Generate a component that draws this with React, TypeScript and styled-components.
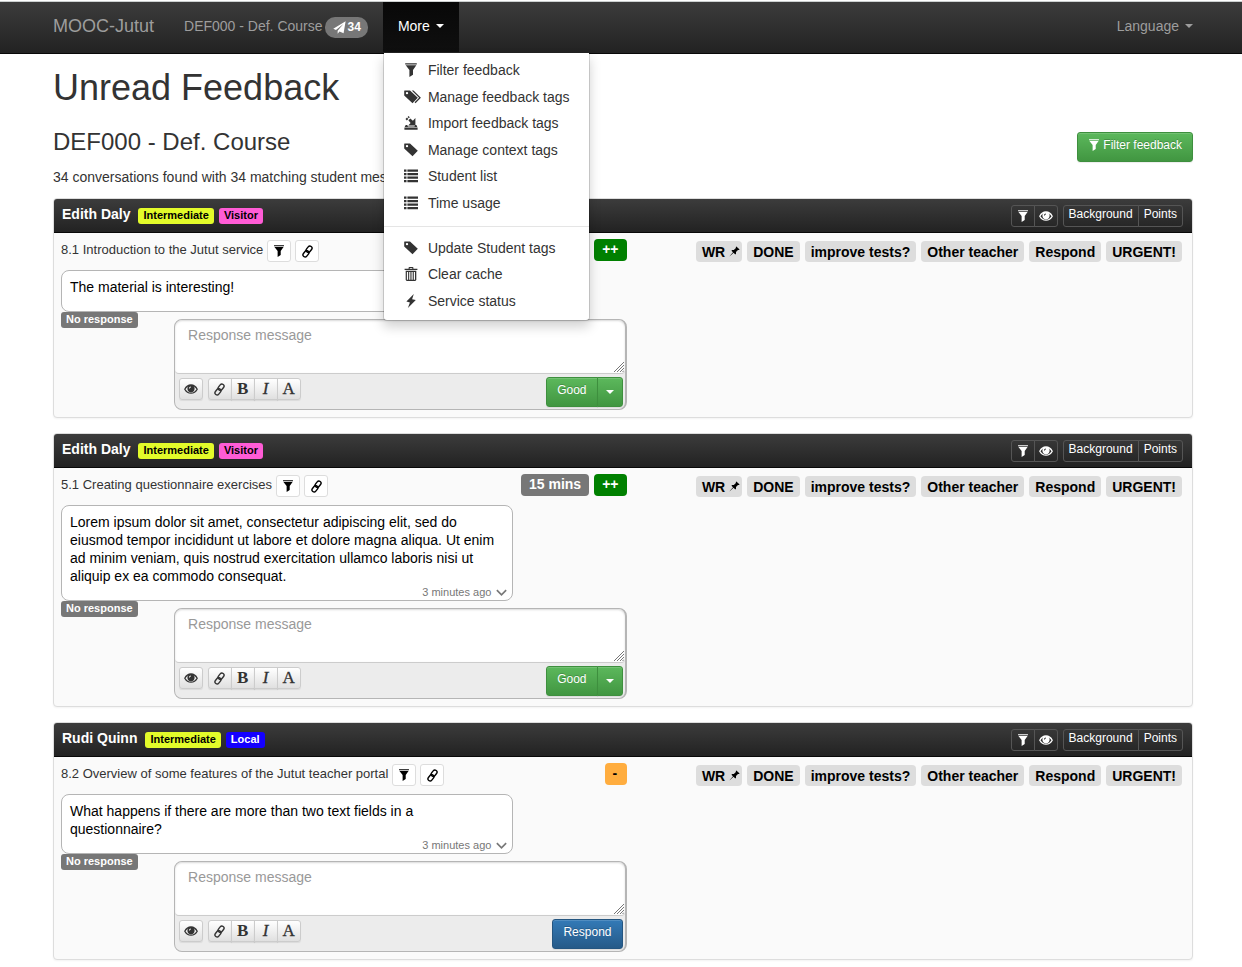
import React from "react";
import styled, { createGlobalStyle, css } from "styled-components";

const GlobalStyle = createGlobalStyle`
  *, *::before, *::after { box-sizing: border-box; }
  body {
    margin: 0;
    background: #fff;
    color: #333;
    font: 14px/20px "Liberation Sans", Arial, sans-serif;
  }
  button, textarea { font-family: inherit; margin: 0; }
  h1, h2, h3, p, ul { margin: 0; padding: 0; font-weight: 400; }
  ul { list-style: none; }
  a { color: inherit; text-decoration: none; }
  svg { display: block; flex: none; fill: currentColor; }
`;

/* ---------- icons ---------- */

type IconName =
  | "filter" | "tag" | "tags" | "import" | "list" | "trash" | "flash"
  | "eye" | "link" | "pin" | "send" | "down";

const shapes: Record<IconName, React.ReactNode> = {
  filter: (
    <path d="M1.2 .2h11.6v1.4H1.2zM1.700 2.300h10.600L9 7v4.700l-3.600 2.200V7z" />
  ),
  tag: (
    <path fillRule="evenodd" d="M.5 .5H6l7.8 7.3-5.3 5.4L.2 5.6V.9zM3 1.9a1.2 1.2 0 1 0 0 2.4 1.2 1.2 0 0 0 0-2.4z" />
  ),
  tags: (
    <>
      <path fillRule="evenodd" d="M.5 .5H6l7.8 7.3-5.3 5.4L.2 5.6V.9zM3 1.9a1.2 1.2 0 1 0 0 2.4 1.2 1.2 0 0 0 0-2.4z" />
      <path d="M7.8 .5h1.7l7.4 7.3-5.4 5.4-.9-.9 4.5-4.500z" />
    </>
  ),
  import: (
    <>
      <path d="M4.400 4.300 6.300 2.400 8.900 4.700 11.400 2.100v7.400H4.200l2.400-2.500z" />
      <path d="M1.500 3.100 3 1.600l1.300 1.300L2.800 4.400zM3.600 1.100 4.600.1l1.200 1.200-1 1z" />
      <path d="M1.700 9h1.600l.6 1.400h6.600L11.100 9h1.300l.9 1.900H.7zM.4 11.400h13.200v2.400H.4z" />
    </>
  ),
  list: (
    <path d="M0 .5h2.500v2.300H0zM3.400 .5H14v2.300H3.400zM0 4h2.500v2.300H0zM3.400 4H14v2.300H3.400zM0 7.500h2.500v2.300H0zM3.400 7.500H14v2.300H3.400zM0 11h2.500v2.300H0zM3.400 11H14v2.300H3.400z" />
  ),
  trash: (
    <>
      <path d="M.6 1.700h4V.6l.7-.6h3.400l.7.6v1.100h4v1.400H.6zM5.700 1v.7h2.600V1z" fillRule="evenodd" />
      <path d="M1.700 3.800h10.600V13l-1 1H2.700l-1-1zM2.900 5v7.800h1.200V5zm2.300 0v7.800h1.200V5zm2.300 0v7.800h1.200V5zm2.300 0v7.800H11V5z" fillRule="evenodd" />
    </>
  ),
  flash: <path d="M9.800 0 2.400 7.600l3.500.9L3.900 14l7.900-7.900-3.700-.9z" />,
  eye: (
    <>
      <path d="M.8 7.200C2.200 4.500 4.400 3 7 3s4.800 1.500 6.200 4.200C11.800 9.700 9.600 11.200 7 11.200S2.200 9.700.8 7.200z" fill="none" stroke="currentColor" strokeWidth="1.300" />
      <path
        fillRule="evenodd"
        d="M7 3a3.600 3.600 0 0 0 0 7.200A3.600 3.600 0 0 0 7 3zM5 6.400c0-1.100.8-1.900 1.900-1.900v1c-.6.1-.9.4-1 1z"
      />
    </>
  ),
  link: (
    <g fill="none" stroke="currentColor" strokeWidth="1.500">
      <rect x="-2.300" y="-3.700" width="4.600" height="7.400" rx="2.300" transform="translate(8.700 4.500) rotate(38)" />
      <rect x="-2.300" y="-3.700" width="4.600" height="7.400" rx="2.300" transform="translate(5.300 9.500) rotate(38)" />
    </g>
  ),
  pin: (
    <path d="M9.400 .5l4.100 4.100-.8.500-1.300-.1-2.500 2.700v2.100l-.9.900-2.200-2.200L.9 13.200l-.2-.2 4.400-5-2-2.100.9-.9 2.100.1 2.700-2.500-.1-1.300z" />
  ),
  send: <path d="M13.600 .3.300 8.400l2.900 1.300L11.200 3.200 5 10.400v3.200l2-2.300 4.400 1.800z" />,
  down: (
    <path d="M2 4.400l5 5 5-5" fill="none" stroke="currentColor" strokeWidth="1.800" />
  ),
};

const Icon = ({ name, size = 14 }: { name: IconName; size?: number }) => {
  const wide = name === "tags";
  return (
    <svg
      width={wide ? size + 3 : size}
      height={size}
      viewBox={wide ? "0 0 17 14" : "0 0 14 14"}
      aria-hidden="true"
    >
      {shapes[name]}
    </svg>
  );
};

const Caret = styled.span`
  border-top: 4px solid;
  border-left: 4px solid transparent;
  border-right: 4px solid transparent;
`;

/* ---------- navigation bar ---------- */

const TopEdge = styled.div`
  height: 2px;
  border-bottom: 1px solid #ccd0d0;
`;

const Navbar = styled.nav`
  display: flex;
  height: 52px;
  padding: 0 34px 0 53px;
  background: linear-gradient(#3c3c3c, #222);
  border-bottom: 1px solid #080808;
  color: #9d9d9d;
`;

const Brand = styled.a`
  padding: 14px 15px 16px 0;
  font-size: 18px;
`;

const NavList = styled.ul`
  display: flex;
  flex: 1;
`;

const NavItem = styled.li<{ $end?: boolean }>`
  position: relative;
  ${(p) => p.$end && "margin-left: auto;"}
`;

const navEntry = css`
  display: flex;
  align-items: center;
  height: 50px;
  padding: 0 15px 2px;
  font-size: 14px;
  line-height: 20px;
`;

const NavLink = styled.a`
  ${navEntry}
  gap: 2px;
`;

const NavToggle = styled.button<{ $open?: boolean }>`
  ${navEntry}
  gap: 6px;
  border: 0;
  color: ${(p) => (p.$open ? "#fff" : "#9d9d9d")};
  background: ${(p) => (p.$open ? "linear-gradient(#080808, #0f0f0f)" : "none")};
`;

const CountBadge = styled.span`
  display: flex;
  align-items: center;
  gap: 2px;
  height: 21px;
  margin-top: 2px;
  padding: 0 7px 0 8px;
  border-radius: 10px;
  background: #777;
  color: #fff;
  font-size: 12px;
  font-weight: 700;
`;

const Menu = styled.div`
  position: absolute;
  z-index: 10;
  top: 51px;
  left: 0;
  width: 207px;
  padding: 4px 0 6px;
  background: #fff;
  background-clip: padding-box;
  border: 1px solid rgba(0, 0, 0, 0.15);
  border-top: 0;
  border-radius: 0 0 4px 4px;
  box-shadow: 0 6px 12px rgba(0, 0, 0, 0.175);
  color: #333;
`;

const MenuGroup = styled.ul<{ $height: number }>`
  display: grid;
  grid-auto-rows: 1fr;
  height: ${(p) => p.$height}px;
`;

const MenuDivider = styled.hr`
  margin: 10px 0 8px;
  border: 0;
  border-top: 1px solid #e5e5e5;
`;

const MenuLink = styled.a`
  display: flex;
  align-items: center;
  height: 100%;
  padding-left: 20px;
`;

const MenuIcon = styled.span`
  width: 24px;
`;

/* ---------- page head ---------- */

const Page = styled.main`
  padding: 14px 49px 0 53px;
`;

const Title = styled.h1`
  font-size: 36px;
  line-height: 40px;
`;

const CourseHead = styled.header`
  display: flex;
  justify-content: space-between;
  align-items: flex-start;
  margin: 21px 0 11px;
`;

const CourseName = styled.h2`
  margin-bottom: 12px;
  font-size: 24px;
  line-height: 26px;
`;

const tones = {
  green: css`
    border-color: #3e8f3e;
    background: linear-gradient(#5cb85c, #419641);
  `,
  blue: css`
    border-color: #245580;
    background: linear-gradient(#337ab7, #265a88);
  `,
};

const ActionButton = styled.button<{ $tone: keyof typeof tones; $spaced?: boolean }>`
  display: flex;
  align-items: center;
  gap: 3px;
  height: 30px;
  ${(p) => p.$spaced && "margin-top: 3px;"}
  padding: 0 10px 4px;
  border: 1px solid;
  border-radius: 3px;
  color: #fff;
  font-size: 12px;
  line-height: 18px;
  text-shadow: 0 -1px 0 rgba(0, 0, 0, 0.2);
  box-shadow: inset 0 1px 0 rgba(255, 255, 255, 0.15), 0 1px 1px rgba(0, 0, 0, 0.075);
  ${(p) => tones[p.$tone]}
`;

const SplitButton = styled.div`
  display: flex;

  & > :first-child { border-radius: 3px 0 0 3px; }
  & > :last-child {
    margin-left: -1px;
    padding: 0 8px;
    border-radius: 0 3px 3px 0;
  }
`;

/* ---------- conversation panel ---------- */

const Panel = styled.article`
  margin-bottom: 15px;
  background: #fafafa;
  border: 1px solid #ddd;
  border-radius: 4px;
  box-shadow: 0 1px 2px rgba(0, 0, 0, 0.05);
`;

const PanelHead = styled.header`
  display: flex;
  align-items: center;
  height: 34px;
  padding: 0 9px 0 8px;
  background: linear-gradient(#3c3c3c, #222);
  border-bottom: 1px solid #080808;
  border-radius: 3px 3px 0 0;
  color: #fff;
`;

const Student = styled.h3`
  margin-right: 8px;
  padding-bottom: 3px;
  font-size: 14px;
  font-weight: 700;
`;

const Label = styled.span<{ $bg: string; $fg: string }>`
  display: inline-block;
  height: 16px;
  margin-right: 5px;
  padding: 0 5px;
  border-radius: 3px;
  background: ${(p) => p.$bg};
  color: ${(p) => p.$fg};
  font-size: 11px;
  font-weight: 700;
  line-height: 15px;
`;

const HeadTools = styled.div`
  display: flex;
  gap: 5px;
  margin-left: auto;
`;

const ButtonGroup = styled.div`
  display: flex;

  & > button + button { margin-left: -1px; }
  & > button:not(:first-child) { border-top-left-radius: 0; border-bottom-left-radius: 0; }
  & > button:not(:last-child) { border-top-right-radius: 0; border-bottom-right-radius: 0; }
`;

const smallButton = css`
  display: flex;
  align-items: center;
  justify-content: center;
  min-width: 24px;
  height: 22px;
  border: 1px solid;
  border-radius: 3px;
`;

const HeadButton = styled.button`
  ${smallButton}
  padding: 0 4px;
  border-color: #555;
  background: none;
  color: #fff;
  font-size: 12px;
  line-height: 18px;
`;

const HeadText = styled.span`
  padding: 0 1px 3px;
`;

const PlainButton = styled.button`
  ${smallButton}
  padding: 0;
  border-color: #ddd;
  background: #fff;
  color: #000;
`;

const ToolButton = styled.button<{ $style?: string }>`
  ${smallButton}
  padding: 0 1px 0 0;
  border-color: #ccc;
  background: linear-gradient(#fff, #e0e0e0);
  box-shadow: 0 1px 1px rgba(0, 0, 0, 0.075);
  color: #333;
  font-family: "Liberation Serif", serif;
  font-size: 17px;
  line-height: 20px;
  font-weight: ${(p) => (p.$style === "bold" ? 700 : 400)};
  font-style: ${(p) => (p.$style === "italic" ? "italic" : "normal")};
  -webkit-text-stroke: ${(p) => (p.$style === "bold" ? "0" : "0.3px")};
`;

const PanelBody = styled.div`
  display: flex;
  justify-content: space-between;
  padding: 6px 10px 7px 7px;
`;

const Thread = styled.div`
  width: calc(50% + 5px);
`;

const ExerciseRow = styled.div`
  display: flex;
  align-items: flex-start;
  height: 31px;
`;

const Exercise = styled.h3`
  margin-right: 4px;
  font-size: 13px;
  line-height: 22px;
`;

const ExerciseTools = styled.div`
  display: flex;
  gap: 4px;
  padding-top: 1px;
`;

const Badges = styled.div`
  display: flex;
  gap: 5px;
  margin-left: auto;
`;

const Badge = styled.span<{ $bg: string; $fg: string }>`
  min-width: 22px;
  height: 22px;
  padding: 0 8px;
  border-radius: 4px;
  background: ${(p) => p.$bg};
  color: ${(p) => p.$fg};
  font-weight: 700;
  line-height: 21px;
`;

const Bubble = styled.div`
  width: 80%;
  padding: 7px 4px 0 8px;
  border: 1px solid #b5b5b5;
  border-radius: 8px;
  background: #fff;
  color: #000;
  line-height: 18px;
`;

const Posted = styled.div`
  display: flex;
  align-items: center;
  justify-content: flex-end;
  gap: 4px;
  height: 15px;
  padding-bottom: 1px;
  color: #777;
  font-size: 11px;
`;

const ReplyArea = styled.div`
  display: flex;
  align-items: flex-start;
  justify-content: space-between;
`;

const ReplyForm = styled.form`
  width: 80%;
  margin-top: 7px;
  border: 1px solid #b5b5b5;
  border-right-width: 2px;
  border-radius: 8px;
  background: #ececec;
`;

const Field = styled.div`
  position: relative;
  height: 54px;
  border-bottom: 1px solid #ccc;
  border-radius: 7px 7px 4px 4px;
  overflow: hidden;
`;

const Message = styled.textarea`
  display: block;
  width: 100%;
  height: 53px;
  padding: 5px 13px;
  border: 0;
  border-radius: 7px 7px 4px 4px;
  background: #fff;
  box-shadow: inset 0 1px 2px rgba(0, 0, 0, 0.15);
  color: #555;
  font-size: 14px;
  line-height: 20px;
  resize: none;

  &::placeholder { color: #999; opacity: 1; }
`;

const Grip = styled.svg`
  position: absolute;
  right: 1px;
  bottom: 1px;
`;

const Toolbar = styled.div`
  display: flex;
  align-items: flex-start;
  gap: 5px;
  padding: 3px 2px 2px 4px;
`;

const Tools = styled.div`
  display: flex;
  gap: 5px;
  padding-top: 1px;
  margin-right: auto;
`;

const TagList = styled.ul`
  display: flex;
  gap: 5px;
  padding-top: 2px;
`;

const Tag = styled.li`
  display: flex;
  align-items: center;
  gap: 4px;
  height: 21px;
  padding: 0 6px;
  border-radius: 4px;
  background: #ddd;
  color: #000;
  font-weight: 700;

  &:has(svg) { padding-right: 2px; }
`;

/* ---------- data ---------- */

type Mark = { text: string; bg: string; fg: string };

type Conversation = {
  student: string;
  labels: Mark[];
  exercise: string;
  badges: Mark[];
  message: string;
  posted?: string;
  graded: boolean;
};

const intermediate: Mark = { text: "Intermediate", bg: "#e3fb2a", fg: "#000" };
const visitor: Mark = { text: "Visitor", bg: "#ff5cd6", fg: "#000" };
const local: Mark = { text: "Local", bg: "#1400ff", fg: "#fff" };
const plus: Mark = { text: "++", bg: "#008000", fg: "#fff" };

const conversations: Conversation[] = [
  {
    student: "Edith Daly",
    labels: [intermediate, visitor],
    exercise: "8.1 Introduction to the Jutut service",
    badges: [plus],
    message: "The material is interesting!",
    graded: true,
  },
  {
    student: "Edith Daly",
    labels: [intermediate, visitor],
    exercise: "5.1 Creating questionnaire exercises",
    badges: [{ text: "15 mins", bg: "#777", fg: "#fff" }, plus],
    message:
      "Lorem ipsum dolor sit amet, consectetur adipiscing elit, sed do eiusmod tempor incididunt ut labore et dolore magna aliqua. Ut enim ad minim veniam, quis nostrud exercitation ullamco laboris nisi ut aliquip ex ea commodo consequat.",
    posted: "3 minutes ago",
    graded: true,
  },
  {
    student: "Rudi Quinn",
    labels: [intermediate, local],
    exercise: "8.2 Overview of some features of the Jutut teacher portal",
    badges: [{ text: "-", bg: "#ffad3f", fg: "#000" }],
    message: "What happens if there are more than two text fields in a questionnaire?",
    posted: "3 minutes ago",
    graded: false,
  },
];

const tags = ["WR", "DONE", "improve tests?", "Other teacher", "Respond", "URGENT!"];

const menuGroups: { height: number; items: [IconName, string][] }[] = [
  {
    height: 159,
    items: [
      ["filter", "Filter feedback"],
      ["tags", "Manage feedback tags"],
      ["import", "Import feedback tags"],
      ["tag", "Manage context tags"],
      ["list", "Student list"],
      ["list", "Time usage"],
    ],
  },
  {
    height: 79,
    items: [
      ["tag", "Update Student tags"],
      ["trash", "Clear cache"],
      ["flash", "Service status"],
    ],
  },
];

/* ---------- components ---------- */

const ConversationPanel = ({ item }: { item: Conversation }) => (
  <Panel>
    <PanelHead>
      <Student>{item.student}</Student>
      {item.labels.map((l) => (
        <Label key={l.text} $bg={l.bg} $fg={l.fg}>{l.text}</Label>
      ))}
      <HeadTools>
        <ButtonGroup>
          <HeadButton type="button" aria-label="Filter"><Icon name="filter" size={12} /></HeadButton>
          <HeadButton type="button" aria-label="View"><Icon name="eye" /></HeadButton>
        </ButtonGroup>
        <ButtonGroup>
          <HeadButton type="button"><HeadText>Background</HeadText></HeadButton>
          <HeadButton type="button"><HeadText>Points</HeadText></HeadButton>
        </ButtonGroup>
      </HeadTools>
    </PanelHead>
    <PanelBody>
      <Thread>
        <ExerciseRow>
          <Exercise>{item.exercise}</Exercise>
          <ExerciseTools>
            <PlainButton type="button" aria-label="Filter by exercise"><Icon name="filter" size={12} /></PlainButton>
            <PlainButton type="button" aria-label="Link to exercise"><Icon name="link" size={13} /></PlainButton>
          </ExerciseTools>
          <Badges>
            {item.badges.map((b) => (
              <Badge key={b.text} $bg={b.bg} $fg={b.fg}>{b.text}</Badge>
            ))}
          </Badges>
        </ExerciseRow>
        <Bubble>
          <p>{item.message}</p>
          <Posted>
            {item.posted}
            {item.posted && <Icon name="down" size={13} />}
          </Posted>
        </Bubble>
        <ReplyArea>
          <Label $bg="#777" $fg="#fff">No response</Label>
          <ReplyForm>
            <Field>
              <Message aria-label="Response message" placeholder="Response message" />
              <Grip width="10" height="10" viewBox="0 0 10 10" aria-hidden="true">
                <path d="M0 10 10 0M3 10l7-7M6 10l4-4M8.500 10 10 8.500" stroke="#777" strokeWidth="1" />
              </Grip>
            </Field>
            <Toolbar>
              <Tools>
                <ToolButton type="button" aria-label="Preview"><Icon name="eye" /></ToolButton>
                <ButtonGroup>
                  <ToolButton type="button" aria-label="Insert link"><Icon name="link" size={13} /></ToolButton>
                  <ToolButton type="button" $style="bold">B</ToolButton>
                  <ToolButton type="button" $style="italic">I</ToolButton>
                  <ToolButton type="button">A</ToolButton>
                </ButtonGroup>
              </Tools>
              {item.graded ? (
                <SplitButton>
                  <ActionButton type="button" $tone="green">Good</ActionButton>
                  <ActionButton type="button" $tone="green" aria-label="Other grades"><Caret /></ActionButton>
                </SplitButton>
              ) : (
                <ActionButton type="button" $tone="blue">Respond</ActionButton>
              )}
            </Toolbar>
          </ReplyForm>
        </ReplyArea>
      </Thread>
      <TagList>
        {tags.map((t) => (
          <Tag key={t}>
            {t}
            {t === "WR" && <Icon name="pin" size={11} />}
          </Tag>
        ))}
      </TagList>
    </PanelBody>
  </Panel>
);

export default function App() {
  return (
    <>
      <GlobalStyle />
      <TopEdge />
      <Navbar>
        <Brand href="#">MOOC-Jutut</Brand>
        <NavList>
          <NavItem>
            <NavLink href="#">
              DEF000 - Def. Course
              <CountBadge><Icon name="send" size={13} />34</CountBadge>
            </NavLink>
          </NavItem>
          <NavItem>
            <NavToggle type="button" $open aria-expanded="true">More <Caret /></NavToggle>
            <Menu>
              {menuGroups.map((g, i) => (
                <React.Fragment key={g.height}>
                  {i > 0 && <MenuDivider />}
                  <MenuGroup $height={g.height}>
                    {g.items.map(([icon, text]) => (
                      <li key={text}>
                        <MenuLink href="#"><MenuIcon><Icon name={icon} /></MenuIcon>{text}</MenuLink>
                      </li>
                    ))}
                  </MenuGroup>
                </React.Fragment>
              ))}
            </Menu>
          </NavItem>
          <NavItem $end>
            <NavToggle type="button">Language <Caret /></NavToggle>
          </NavItem>
        </NavList>
      </Navbar>
      <Page>
        <Title>Unread Feedback</Title>
        <CourseHead>
          <div>
            <CourseName>DEF000 - Def. Course</CourseName>
            <p>34 conversations found with 34 matching student messages.</p>
          </div>
          <ActionButton type="button" $tone="green" $spaced>
            <Icon name="filter" size={12} />Filter feedback
          </ActionButton>
        </CourseHead>
        {conversations.map((c) => (
          <ConversationPanel key={c.exercise} item={c} />
        ))}
      </Page>
    </>
  );
}
